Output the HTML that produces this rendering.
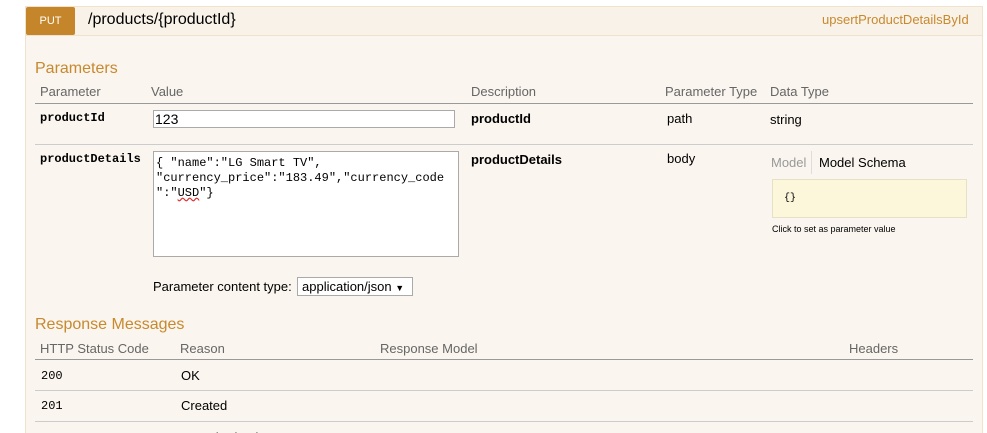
<!DOCTYPE html>
<html><head><style>
*{margin:0;padding:0;box-sizing:border-box}
html,body{width:987px;height:433px;overflow:hidden}
body{background:#fff;font-family:"Liberation Sans",sans-serif;position:relative;color:#000}
.a{position:absolute;white-space:nowrap}
.box{position:absolute;left:25px;top:6px;width:958px;height:440px;background:#faf5ee;border:1px solid #f1e2cc}
.hdr{position:absolute;left:25px;top:6px;width:958px;height:30px;background:#f9f2e8;border:1px solid #f1e2cc}
.put{position:absolute;left:26px;top:7px;width:49px;height:28px;background:#c5862b;color:#fff;font-size:11px;text-align:center;line-height:28px;border-radius:2px}
.h2{color:#c8892e;font-size:16px}
.th{color:#666;font-size:13px}
.b{font-family:"Liberation Mono",monospace;font-weight:bold;font-size:12px}
.ln{position:absolute;left:35px;width:938px;height:1px}
.m{font-family:"Liberation Mono",monospace;font-size:12px}
</style></head><body>
<div class="box"></div>
<div class="hdr"></div>
<div class="put">PUT</div>
<div class="a" style="left:88px;top:11px;font-size:16px">/products/{productId}</div>
<div class="a" style="left:822px;top:12px;font-size:13px;color:#c8892e">upsertProductDetailsById</div>

<div class="a h2" style="left:35px;top:60px">Parameters</div>
<div class="a th" style="left:40px;top:84px">Parameter</div>
<div class="a th" style="left:151px;top:84px">Value</div>
<div class="a th" style="left:471px;top:84px">Description</div>
<div class="a th" style="left:665px;top:84px">Parameter Type</div>
<div class="a th" style="left:770px;top:84px">Data Type</div>
<div class="ln" style="top:103px;background:#999"></div>

<div class="a b" style="left:40px;top:111px">productId</div>
<div class="a" style="left:153px;top:110px;width:302px;height:18px;border:1px solid #aaa;background:#fff;font-size:14px;padding-left:1px;line-height:16px">123</div>
<div class="a" style="left:471px;top:111px;font-weight:bold;font-size:13px">productId</div>
<div class="a" style="left:667px;top:111px;font-size:13px">path</div>
<div class="a" style="left:770px;top:112px;font-size:13px">string</div>
<div class="ln" style="top:144px;background:#ccc"></div>

<div class="a b" style="left:40px;top:152px">productDetails</div>
<div class="a m" style="left:153px;top:151px;width:306px;height:106px;border:1px solid #aaa;background:#fff;padding:4px 2px;line-height:15px;white-space:pre">{ "name":"LG Smart TV",
"currency_price":"183.49","currency_code
":"<span style="text-decoration:underline wavy #d33">USD</span>"}</div>
<div class="a" style="left:471px;top:152px;font-weight:bold;font-size:13px">productDetails</div>
<div class="a" style="left:667px;top:151px;font-size:13px">body</div>
<div class="a" style="left:771px;top:155px;font-size:13px;color:#999">Model</div>
<div class="a" style="left:811px;top:151px;width:1px;height:23px;background:#ddd"></div>
<div class="a" style="left:819px;top:155px;font-size:13px">Model Schema</div>
<div class="a" style="left:772px;top:179px;width:195px;height:39px;background:#fcf6db;border:1px solid #e5e0c6"></div>
<div class="a" style="left:784px;top:193px;font-family:'Liberation Mono',monospace;font-size:10px">{}</div>
<div class="a" style="left:772px;top:224px;font-size:9px">Click to set as parameter value</div>

<div class="a" style="left:153px;top:279px;font-size:13px">Parameter content type:</div>
<div class="a" style="left:297px;top:277px;width:116px;height:19px;border:1px solid #aaa;background:#fff;font-size:13px;padding-left:4px;line-height:17px">application/json <span style="font-size:9px">▼</span></div>

<div class="a h2" style="left:35px;top:316px">Response Messages</div>
<div class="a th" style="left:40px;top:341px">HTTP Status Code</div>
<div class="a th" style="left:180px;top:341px">Reason</div>
<div class="a th" style="left:380px;top:341px">Response Model</div>
<div class="a th" style="left:849px;top:341px">Headers</div>
<div class="ln" style="top:359px;background:#999"></div>
<div class="a m" style="left:41px;top:369px">200</div>
<div class="a" style="left:181px;top:368px;font-size:13px">OK</div>
<div class="ln" style="top:390px;background:#ccc"></div>
<div class="a m" style="left:41px;top:399px">201</div>
<div class="a" style="left:181px;top:398px;font-size:13px">Created</div>
<div class="ln" style="top:421px;background:#ccc"></div>
<div class="a m" style="left:41px;top:431px">401</div>
<div class="a" style="left:181px;top:430px;font-size:13px">Unauthorized</div>
</body></html>
